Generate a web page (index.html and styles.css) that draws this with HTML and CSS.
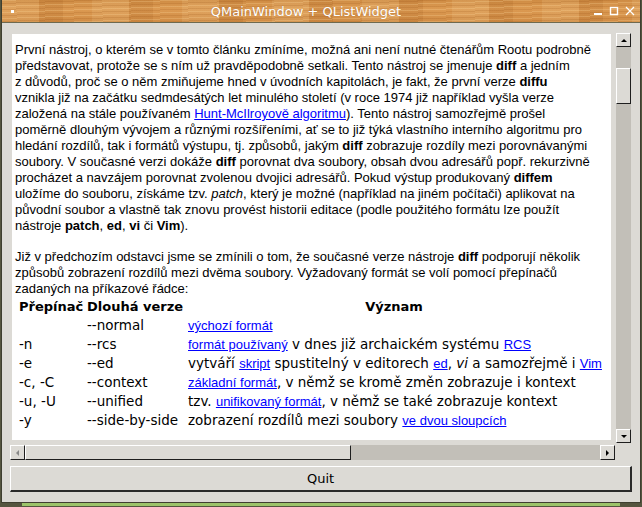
FILE: index.html
```html
<!DOCTYPE html>
<html lang="cs">
<head>
    <meta charset="UTF-8">
    <title>QMainWindow + QListWidget</title>
    <link rel="stylesheet" href="styles.css">
</head>
<body>
<div class="window">
    <div class="titlebar">
        <span class="win-icon"></span>
        <span class="title">QMainWindow + QListWidget</span>
        <div class="win-buttons">
            <svg class="wb" width="10" height="10" viewBox="0 0 10 10"><rect x="1" y="7" width="8" height="2" fill="#fff"/></svg>
            <svg class="wb" width="10" height="10" viewBox="0 0 10 10"><rect x="1.5" y="1.5" width="7" height="7" fill="none" stroke="#fff" stroke-width="1.4"/></svg>
            <svg class="wb" width="10" height="10" viewBox="0 0 10 10"><path d="M1 1 L9 9 M9 1 L1 9" stroke="#fff" stroke-width="1.2"/></svg>
        </div>
    </div>
    <div class="client">
        <div class="view-row">
            <div class="view-col">
                <div class="browser">
                    <p>První nástroj, o kterém se v tomto článku zmíníme, možná ani není nutné čtenářům Rootu podrobně<br>
                    představovat, protože se s ním už pravděpodobně setkali. Tento nástroj se jmenuje <b>diff</b> a jedním<br>
                    z důvodů, proč se o něm zmiňujeme hned v úvodních kapitolách, je fakt, že první verze <b>diffu</b><br>
                    vznikla již na začátku sedmdesátých let minulého století (v roce 1974 již například vyšla verze<br>
                    založená na stále používaném <a href="#">Hunt-McIlroyově algoritmu</a>). Tento nástroj samozřejmě prošel<br>
                    poměrně dlouhým vývojem a různými rozšířeními, ať se to již týká vlastního interního algoritmu pro<br>
                    hledání rozdílů, tak i formátů výstupu, tj. způsobů, jakým <b>diff</b> zobrazuje rozdíly mezi porovnávanými<br>
                    soubory. V současné verzi dokáže <b>diff</b> porovnat dva soubory, obsah dvou adresářů popř. rekurzivně<br>
                    procházet a navzájem porovnat zvolenou dvojici adresářů. Pokud výstup produkovaný <b>diffem</b><br>
                    uložíme do souboru, získáme tzv. <i>patch</i>, který je možné (například na jiném počítači) aplikovat na<br>
                    původní soubor a vlastně tak znovu provést historii editace (podle použitého formátu lze použít<br>
                    nástroje <b>patch</b>, <b>ed</b>, <b>vi</b> či <b>Vim</b>).</p>
                    <p class="last">Již v předchozím odstavci jsme se zmínili o tom, že současné verze nástroje <b>diff</b> podporují několik<br>
                    způsobů zobrazení rozdílů mezi dvěma soubory. Vyžadovaný formát se volí pomocí přepínačů<br>
                    zadaných na příkazové řádce:</p>
                    <div class="table">
                        <div class="th">Přepínač</div><div class="th">Dlouhá verze</div><div class="th center">Význam</div>
                        <div></div><div>--normal</div><div><a href="#">výchozí formát</a></div>
                        <div>-n</div><div>--rcs</div><div><a href="#">formát používaný</a> v dnes již archaickém systému <a href="#">RCS</a></div>
                        <div>-e</div><div>--ed</div><div>vytváří <a href="#">skript</a> spustitelný v editorech <a href="#">ed</a>, <i>vi</i> a samozřejmě i <a href="#">Vim</a></div>
                        <div>-c, -C</div><div>--context</div><div><a href="#">základní formát</a>, v němž se kromě změn zobrazuje i kontext</div>
                        <div>-u, -U</div><div>--unified</div><div>tzv. <a href="#">unifikovaný formát</a>, v němž se také zobrazuje kontext</div>
                        <div>-y</div><div>--side-by-side</div><div>zobrazení rozdílů mezi soubory <a href="#">ve dvou sloupcích</a></div>
                    </div>
                </div>
                <div class="hscroll">
                    <div class="sb-btn"><span class="arr arr-left"></span></div>
                    <div class="h-thumb"></div>
                    <div class="h-track"></div>
                    <div class="sb-btn"><span class="arr arr-right"></span></div>
                </div>
            </div>
            <div class="vscroll">
                <div class="sb-btn"><span class="arr arr-up"></span></div>
                <div class="v-pre"></div>
                <div class="v-thumb"></div>
                <div class="v-track"></div>
                <div class="sb-btn"><span class="arr arr-down"></span></div>
            </div>
        </div>
        <button class="quit">Quit</button>
    </div>
</div>
<div class="desk"></div>
</body>
</html>
```

FILE: styles.css
```css
html{
    height: 100%;
}
body{
    margin: 0;
    padding: 0;
    height: 100%;
    background-color: #55553f;
    font-family: "DejaVu Sans", sans-serif;
    overflow: hidden;
}
.window{
    width: 638px;
    margin-left: 1px;
    border-left: 1px solid #3f3f30;
    border-right: 1px solid #3f3f30;
    border-bottom: 1px solid #3f3f30;
    background-color: #dcdad5;
}
.titlebar{
    position: relative;
    display: flex;
    align-items: center;
    justify-content: center;
    height: 22px;
    border-bottom: 1px solid #6e6a50;
    background-color: #d6934c;
    background-image:
        repeating-linear-gradient(178deg, rgba(255,220,160,0.25) 0 1px, transparent 1px 3px, rgba(150,80,20,0.18) 3px 4px, transparent 4px 6px),
        repeating-linear-gradient(90deg, rgba(255,230,180,0.12) 0 37px, rgba(140,70,10,0.12) 37px 61px, transparent 61px 90px),
        linear-gradient(#cf8c44, #dc9a52 40%, #d08c45);
}
.win-icon{
    position: absolute;
    left: 9px;
    top: 10px;
    width: 3px;
    height: 3px;
    background-color: #fff;
}
.title{
    margin-left: -30px;
    color: #fff;
    font-size: 13px;
    text-shadow: 0 0 1px rgba(120,60,10,0.4);
}
.win-buttons{
    position: absolute;
    right: 5px;
    top: 6px;
    display: flex;
    gap: 6px;
}
.client{
    padding: 10px 7px 10px 8px;
}
.view-row{
    display: flex;
}
.view-col{
    width: 605px;
}
.browser{
    height: 398px;
    margin: 1px 4px 0 2px;
    padding: 8px 3px 0 3px;
    background-color: #fff;
    font-family: "Liberation Sans", Arial, sans-serif;
    font-size: 13px;
    line-height: 16px;
    color: #000;
    overflow: hidden;
    white-space: nowrap;
}
.browser p{
    margin: 0 0 15px 0;
}
.browser p.last{
    margin-bottom: 0;
}
.browser a{
    color: #0000ff;
}
.table{
    display: grid;
    grid-template-columns: 68px 101px 412px;
    margin-left: 4px;
    font-family: "DejaVu Sans", sans-serif;
    font-size: 13.5px;
    line-height: 19px;
}
.table a{
    font-family: "Liberation Sans", Arial, sans-serif;
    font-size: 13px;
}
.th{
    font-weight: bold;
    font-size: 13px;
}
.center{
    text-align: center;
}
.hscroll{
    display: flex;
    height: 15px;
    margin-top: 5px;
    background-color: #c2bfb8;
}
.sb-btn, .h-thumb, .v-thumb{
    box-sizing: border-box;
    display: flex;
    align-items: center;
    justify-content: center;
    background-color: #dcdad5;
    border-top: 1px solid #fff;
    border-left: 1px solid #fff;
    border-right: 1px solid #1e1e1e;
    border-bottom: 1px solid #1e1e1e;
}
.sb-btn{
    width: 15px;
    height: 15px;
    flex: none;
}
.vscroll .sb-btn{
    height: 14px;
}
.h-thumb{
    width: 326px;
    height: 15px;
}
.h-track{
    flex: 1;
}
.vscroll{
    display: flex;
    flex-direction: column;
    width: 15px;
    height: 410px;
    margin-left: 1px;
    background-color: #c2bfb8;
}
.v-pre{
    height: 21px;
}
.v-thumb{
    height: 36px;
}
.v-track{
    flex: 1;
}
.arr{
    width: 0;
    height: 0;
    border: 3px solid transparent;
}
.arr-up{
    border-bottom-color: #000;
    border-top-width: 0;
}
.arr-down{
    border-top-color: #000;
    border-bottom-width: 0;
}
.arr-left{
    border-right-color: #888;
    border-left-width: 0;
}
.arr-right{
    border-left-color: #000;
    border-right-width: 0;
}
.quit{
    display: block;
    width: 622px;
    height: 26px;
    margin-top: 6px;
    background-color: #dcdad5;
    border-top: 1px solid #fff;
    border-left: 1px solid #fff;
    border-right: 2px solid #2a2a2a;
    border-bottom: 2px solid #2a2a2a;
    font-family: "DejaVu Sans", sans-serif;
    font-size: 13px;
    color: #000;
}
.desk{
    height: 3px;
    margin: 0 22px;
    background-color: #9cc46a;
}
```
